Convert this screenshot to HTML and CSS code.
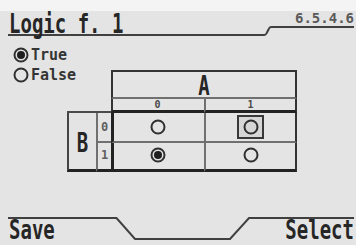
FILE: index.html
```html
<!DOCTYPE html>
<html>
<head>
<meta charset="utf-8">
<link rel="stylesheet" href="styles.css">
</head>
<body>
<div class="screen">
  <header class="header">
    <div class="title-wrap"><span class="big">Logic f. 1</span></div>
    <svg class="step-title" width="8" height="37" viewBox="0 0 8 37"><path d="M0 35 H1 Q3 35 4 32.5 L5.5 29.5 Q6.5 27 8 27"/></svg>
    <div class="version-wrap"><span class="version">6.5.4.6</span></div>
  </header>
  <main class="main">
    <div class="radios">
      <div class="radio-row">
        <svg class="radio" width="16" height="16" viewBox="0 0 16 16"><circle cx="8" cy="8" r="6.5" class="ring"/><circle cx="8" cy="8" r="4" class="dot"/></svg>
        <span>True</span>
      </div>
      <div class="radio-row">
        <svg class="radio" width="16" height="16" viewBox="0 0 16 16"><circle cx="8" cy="8" r="6.5" class="ring"/></svg>
        <span>False</span>
      </div>
    </div>
    <div class="table">
      <div class="corner"></div>
      <div class="ha"><span class="big">A</span></div>
      <div class="sub s0">0</div>
      <div class="sub s1">1</div>
      <div class="bcell"><span class="big">B</span></div>
      <div class="idx i0">0</div>
      <div class="cell c00"><svg class="radio" width="16" height="16" viewBox="0 0 16 16"><circle cx="8" cy="8" r="6.5" class="ring"/></svg></div>
      <div class="cell c01"><div class="sel"><svg class="radio" width="16" height="16" viewBox="0 0 16 16"><circle cx="8" cy="8" r="6.5" class="ring"/></svg></div></div>
      <div class="idx i1">1</div>
      <div class="cell c10"><svg class="radio" width="16" height="16" viewBox="0 0 16 16"><circle cx="8" cy="8" r="6.5" class="ring"/><circle cx="8" cy="8" r="4" class="dot"/></svg></div>
      <div class="cell c11"><svg class="radio" width="16" height="16" viewBox="0 0 16 16"><circle cx="8" cy="8" r="6.5" class="ring"/></svg></div>
    </div>
  </main>
  <footer class="footer">
    <div class="save"><span class="big foot">Save</span></div>
    <svg class="step" width="22" height="28" viewBox="0 0 22 28"><path d="M0 1 H1.5 L20 22 H22"/></svg>
    <div class="mid"></div>
    <svg class="step" width="23" height="28" viewBox="0 0 23 28"><path d="M0 22 H2 L21 1 H23"/></svg>
    <div class="select"><span class="big foot">Select</span></div>
  </footer>
</div>
</body>
</html>
```

FILE: styles.css
```css
html, body {
  margin: 0;
  padding: 0;
}

.screen {
  width: 356px;
  height: 245px;
  display: flex;
  flex-direction: column;
  background: linear-gradient(#f4f4f4 0, #f4f4f4 11px, #e4e4e4 11px);
  color: #262626;
  font-family: "DejaVu Sans Mono", monospace;
  font-weight: bold;
  overflow: hidden;
}

.big {
  display: inline-block;
  font-family: "DejaVu Sans Mono", monospace;
  font-weight: bold;
  font-size: 19px;
  line-height: 17px;
  transform: scaleY(1.43);
  transform-origin: 0 15px;
  white-space: pre;
}

.big.foot {
  transform: scaleY(1.36);
}

/* header */
.header {
  display: flex;
  height: 37px;
  flex: none;
}

.title-wrap {
  display: flex;
  width: 255px;
  height: 36px;
  margin-left: 8px;
  box-sizing: border-box;
  padding-top: 18px;
  padding-left: 1px;
  border-bottom: 2px solid #404040;
}

.step-title {
  flex: none;
  fill: none;
  stroke: #404040;
  stroke-width: 2;
}

.version-wrap {
  flex: 1;
  display: flex;
  justify-content: flex-end;
  height: 28px;
  margin-right: 2px;
  box-sizing: border-box;
  padding-top: 11px;
  border-bottom: 2px solid #404040;
}

.version {
  font-size: 14px;
  line-height: 14px;
  color: #5a5a5a;
}

/* main */
.main {
  flex: 1;
  display: flex;
}

.radios {
  flex: none;
  width: 54px;
  padding-left: 13px;
  padding-top: 8px;
}

.radio-row {
  display: flex;
  align-items: center;
  gap: 2px;
  height: 20px;
  font-size: 15px;
  line-height: 20px;
  color: #353535;
  white-space: nowrap;
}

.radio {
  display: block;
  flex: none;
}

.radio .ring {
  fill: none;
  stroke: #303030;
  stroke-width: 2;
}

.radio .dot {
  fill: #1e1e1e;
}

/* table */
.table {
  margin-top: 33px;
  display: grid;
  grid-template-columns: 29px 15px 93px 93px;
  grid-template-rows: 29px 14px 30px 29px;
  align-self: flex-start;
}

.table > div {
  box-sizing: border-box;
}

.corner {
  grid-column: 1 / 3;
  grid-row: 1 / 3;
  border-bottom: 2px solid #4a4a4a;
}

.ha {
  grid-column: 3 / 5;
  grid-row: 1;
  display: flex;
  justify-content: center;
  padding-top: 8px;
  border-top: 2px solid #333;
  border-left: 2px solid #333;
  border-right: 2px solid #333;
  border-bottom: 2px solid #707070;
}

.sub {
  grid-row: 2;
  font-size: 10px;
  line-height: 12px;
  text-align: center;
  color: #4a4a4a;
  border-bottom: 3px solid #222;
}

.s0 {
  grid-column: 3;
  border-left: 2px solid #333;
  padding-right: 2px;
}

.s1 {
  grid-column: 4;
  border-left: 2px solid #707070;
  border-right: 2px solid #333;
}

.bcell {
  grid-column: 1;
  grid-row: 3 / 5;
  display: flex;
  justify-content: center;
  padding-top: 24px;
  border-left: 2px solid #444;
  border-bottom: 3px solid #222;
}

.idx {
  grid-column: 2;
  display: flex;
  align-items: center;
  justify-content: center;
  font-size: 12px;
  color: #606060;
  border-left: 2px solid #707070;
}

.i0 {
  grid-row: 3;
  border-bottom: 2px solid #707070;
}

.i1 {
  grid-row: 4;
  border-bottom: 3px solid #222;
  padding-bottom: 2px;
}

.cell {
  display: flex;
  align-items: center;
  justify-content: center;
}

.c00, .c10 {
  grid-column: 3;
  border-left: 3px solid #222;
  padding-right: 3px;
}

.c01, .c11 {
  grid-column: 4;
  border-left: 2px solid #707070;
  border-right: 2px solid #333;
}

.c00, .c01 {
  grid-row: 3;
  border-bottom: 2px solid #707070;
}

.c10, .c11 {
  grid-row: 4;
  border-bottom: 3px solid #222;
  padding-bottom: 2px;
}

.sel {
  width: 27px;
  height: 24px;
  box-sizing: border-box;
  display: flex;
  align-items: center;
  justify-content: center;
  border: 2px solid #383838;
  background: #d6d6d6;
}

/* footer */
.footer {
  display: flex;
  height: 28px;
  flex: none;
}

.save {
  display: flex;
  width: 107px;
  margin-left: 8px;
  box-sizing: border-box;
  padding-top: 4.5px;
  padding-left: 1px;
  border-top: 2px solid #404040;
}

.step {
  flex: none;
  fill: none;
  stroke: #404040;
  stroke-width: 2;
}

.mid {
  flex: 1;
  margin-top: 21px;
  border-top: 2px solid #404040;
}

.select {
  display: flex;
  justify-content: flex-end;
  width: 103px;
  margin-right: 2px;
  box-sizing: border-box;
  padding-top: 4.5px;
  border-top: 2px solid #404040;
}
```
